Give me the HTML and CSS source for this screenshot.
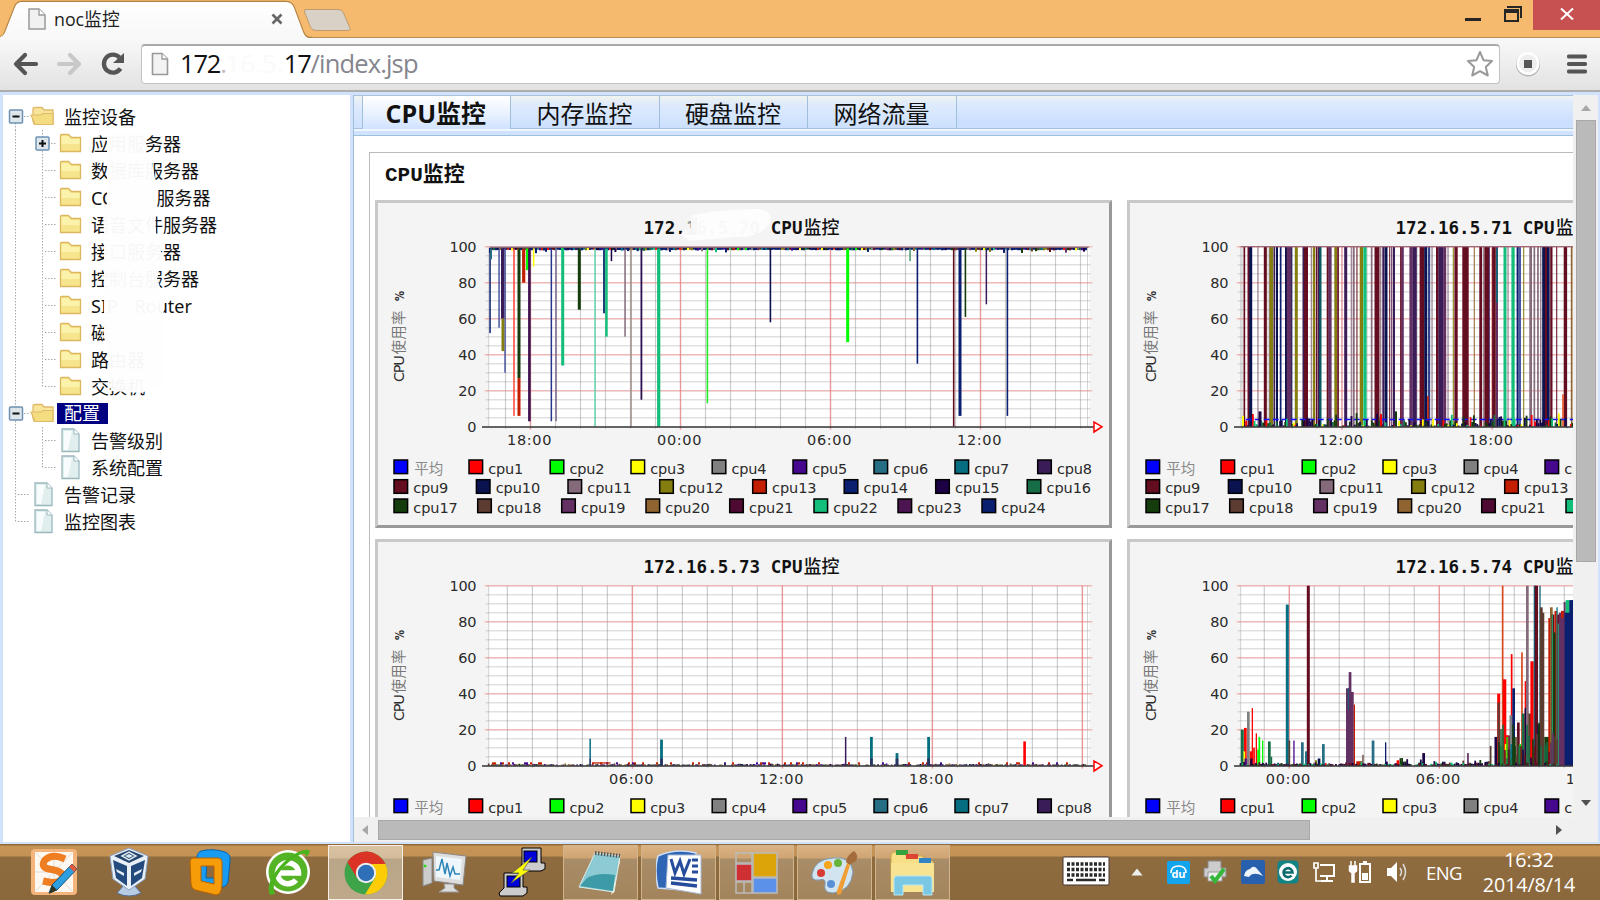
FILE: index.html
```html
<!DOCTYPE html>
<html lang="zh-CN">
<head>
<meta charset="utf-8">
<title>noc监控</title>
<link rel="stylesheet" href="styles.css">
</head>
<body>
<div class="titlebar">
  <div class="tab">
    <svg class="tab-shape" width="360" height="38" viewBox="0 0 360 38">
      <defs><linearGradient id="tg" x1="0" y1="0" x2="0" y2="1"><stop offset="0" stop-color="#fff"/><stop offset="1" stop-color="#f8f8f8"/></linearGradient></defs>
      <path d="M0 36.500H2Q4 35 6 29L15 6Q17 1.500 22 1.500H286Q292 2 294 7L303 31Q305 36.500 309 37.500H312" fill="none" stroke="#b28545" stroke-width="1.600"/>
      <path d="M0 38V37Q4 36 6 30L15 7Q17 2 22 2H286Q292 2 294 8L303 32Q305 37.500 309 38Z" fill="url(#tg)"/>
      <path d="M305 9.500H338Q342 9.500 343.500 13L350 28Q351 30.500 347 30.500H316Q312 30.500 310.500 27L304.500 12Q304 9.500 306 9.500Z" fill="#d9d1c5" stroke="#bd9d70" stroke-width="1"/>
    </svg>
    <svg class="tab-doc" width="18" height="22" viewBox="0 0 18 22"><path d="M1 1H11L17 7V21H1Z" fill="#f1f1f1" stroke="#999" stroke-width="1.500"/><path d="M11 1V7H17" fill="#fff" stroke="#999" stroke-width="1.300"/></svg>
    <span class="tab-title">noc监控</span>
    <svg class="tab-close" width="12" height="12" viewBox="0 0 12 12"><path d="M1.500 1.500L10.500 10.500M10.500 1.500L1.500 10.500" stroke="#666" stroke-width="2.600"/></svg>
  </div>
  <div class="win-buttons">
    <svg width="66" height="30" viewBox="0 0 66 30"><path d="M0 19.500H16" stroke="#262626" stroke-width="3"/><path d="M42 7H56V18" fill="none" stroke="#262626" stroke-width="2"/><path d="M40 9.500V21H53V9.500" fill="none" stroke="#262626" stroke-width="2"/><path d="M39 11H54" stroke="#262626" stroke-width="4"/></svg>
    <div class="win-close"><svg width="14" height="12" viewBox="0 0 14 12"><path d="M1 0.500L13 11.500M13 0.500L1 11.500" stroke="#fff" stroke-width="2"/></svg></div>
  </div>
</div>

<div class="toolbar">
  <svg class="nav" width="128" height="30" viewBox="0 0 128 30">
    <g fill="none" stroke-width="4.200" stroke-linecap="round" stroke-linejoin="round"><path d="M23 15H4M12 6L3 15L12 24" stroke="#555"/><path d="M46 15H66M57 6L66 15L57 24" stroke="#c8c8c8"/></g>
    <path d="M106.500 8.500A9 9 0 1 0 107.500 19.500" fill="none" stroke="#555" stroke-width="4.300"/><path d="M111 4V14H100Z" fill="#555"/>
  </svg>
  <div class="omnibox">
    <svg width="18" height="24" viewBox="0 0 18 24"><path d="M1.500 1.500H11L16.500 7V22.500H1.500Z" fill="#f3f3f3" stroke="#999" stroke-width="1.600"/><path d="M11 1.500V7H16.500" fill="#fff" stroke="#999" stroke-width="1.300"/></svg>
    <span class="url"><span>172<i class="dot">.</i><i class="fade">16.5.</i>17</span><span class="path">/index.jsp</span></span>
    <svg class="star" width="28" height="28" viewBox="0 0 28 28"><path d="M14 2L17.500 10.200L26 11L19.800 17L21.800 25.500L14 21.200L6.200 25.500L8.200 17L2 11L10.500 10.200Z" fill="#fff" stroke="#999" stroke-width="2" stroke-linejoin="round"/></svg>
  </div>
  <svg class="ext" width="26" height="26" viewBox="0 0 26 26"><circle cx="13" cy="13.500" r="12" fill="#b5b5b5"/><circle cx="13" cy="12.500" r="11.500" fill="#fff"/><circle cx="13" cy="12.500" r="9" fill="#eee"/><rect x="9" y="9" width="8" height="8" fill="#555"/></svg>
  <svg class="menu" width="20" height="20" viewBox="0 0 20 20"><path d="M2 2.500H18M2 10H18M2 17.500H18" stroke="#555" stroke-width="4.200" stroke-linecap="round"/></svg>
</div>

<div class="content">
  <div class="sidebar">
    <ul class="tree" id="tree"></ul>
    <svg class="smudge" width="90" height="266" viewBox="0 0 90 266">
      <path d="M16 0H54L55 22L61 30L65 50L64 75L65 100L70 108L70 130L66 145L71 160L73 185L73 252L50 260L20 258L18 240L17 215L13 205V100L12 80L16 70Z" fill="#fefefe" opacity=".97"/>
    </svg>
  </div>
  <div class="main">
    <div class="tabs">
      <div class="tabs-lead"></div>
      <div class="ptab active">CPU监控</div><div class="ptab">内存监控</div><div class="ptab">硬盘监控</div><div class="ptab">网络流量</div>
      <div class="tabs-rest"></div>
    </div>
    <div class="tabs-foot"></div>
    <div class="pane">
      <div class="panel">
        <h2>CPU监控</h2>
        <div class="charts" id="charts"></div>
      </div>
    </div>
    <div class="hscroll"><i class="arr left"></i><i class="hthumb"></i><i class="arr right"></i></div>
  </div>
  <div class="vscroll"><i class="arr up"></i><i class="vthumb"></i><i class="arr down"></i></div>
</div>

<div class="taskbar">
  <div class="tasks">
    <div class="task"><svg width="48" height="48" viewBox="0 0 48 48"><rect x="1" y="1" width="46" height="46" rx="4" fill="#f3b57b"/><rect x="5" y="4" width="38" height="40" fill="#fff8f0"/><path d="M6 5L42 43M42 5L6 43M24 4V44M5 24H43" stroke="#ddd"/><path d="M35 11Q22 5 15 12Q10 19 19 21Q34 23 33 30Q29 37 13 33" fill="none" stroke="#ef7d22" stroke-width="7"/><path d="M42 16L47 21L27 42L19 45L22 37Z" fill="#2d9fe0" stroke="#1a567c"/><path d="M42 16L47 21L44 24L39 19Z" fill="#e25a3a"/><path d="M22 37L27 42L19 46Z" fill="#332"/></svg></div>
    <div class="task vbox"><svg width="42" height="50" viewBox="0 0 42 50"><path d="M16 38H26L33 46Q21 52 9 46Z" fill="#b8cce4" stroke="#54719c"/><path d="M21 1L40 9L37 32L21 43L5 32L2 9Z" fill="#e9f0f7" stroke="#8ba3c2"/><path d="M21 3L36 9L21 16L6 9Z" fill="#26456d"/><path d="M14 9L21 5L28 9L21 13Z" fill="none" stroke="#dbe7f2" stroke-width="1.500"/><path d="M17 9L21 7L25 9L21 11Z" fill="#dbe7f2"/><path d="M5 13L19 19V39L8 31ZM37 13L23 19V39L34 31Z" fill="#244b7d"/><path d="M8 22L16 26V29L9 25ZM34 22L26 26V29L33 25Z" fill="#e5eef8"/></svg></div>
    <div class="task"><svg width="46" height="50" viewBox="0 0 46 50"><path d="M14 4Q26 1 38 5Q44 7 43 14L41 35Q40 39 36 40L14 38L10 14Q9 6 14 4ZM20 13L19 31H33L34 13Z" fill="#179bf3" fill-rule="evenodd" stroke="#0864ac"/><path d="M6 11H31Q35 11 35 15V36Q35 48 29 48L8 43Q4 41 4 37L3 15Q3 11 6 11ZM14 19V34L27 37V19Z" fill="#f69c09" fill-rule="evenodd" stroke="#b66200"/></svg></div>
    <div class="task"><svg width="48" height="50" viewBox="0 0 48 50"><circle cx="24" cy="25" r="22" fill="#fff"/><circle cx="24" cy="25" r="19.500" fill="#54b425"/><path d="M14 26H34.500A10.500 10.500 0 1 0 32 33" fill="none" stroke="#fff" stroke-width="5.500"/><path d="M6 48Q0 35 20 15Q36 1 45 3Q47 6 42 10Q42 2 26 14Q5 32 11 47Z" fill="#4bb31e"/></svg></div>
    <div class="task on chrome"><svg width="44" height="46" viewBox="0 0 44 46"><circle cx="22" cy="23" r="21.500" fill="#3fa449"/><path d="M3.400 12.200A21.500 21.500 0 0 1 41.500 14H22L13 28Z" fill="#dc3327"/><path d="M41.500 14A21.500 21.500 0 0 1 21 44.500L31 28Q34 19 22 14Z" fill="#fccd06"/><circle cx="22" cy="23" r="10.200" fill="#eee"/><circle cx="22" cy="23" r="8.200" fill="#2f6fb7"/></svg></div>
    <div class="task"><svg width="46" height="46" viewBox="0 0 46 46"><path d="M2 11L11 9V34L2 37Z" fill="#ccc" stroke="#888"/><circle cx="4" cy="17" r="1.500" fill="#2fdb22"/><path d="M12 3L45 7L42 36L13 32Z" fill="#ddd" stroke="#888"/><path d="M15 7L41 10L39 31L15 28Z" fill="#eef7fc"/><path d="M15 21H18L21 10L24 25L26 14L29 27L32 18L34 25H39" fill="none" stroke="#2e86b8" stroke-width="1.500"/><path d="M23 35H33V39L38 43H18L24 39Z" fill="#ddd" stroke="#999"/></svg></div>
    <div class="task"><svg width="48" height="50" viewBox="0 0 48 50"><g stroke="#000" stroke-width="1"><path d="M24 1H43V16H47V22L43 24H24L21 22L24 17Z" fill="#ccc"/><rect x="26" y="4" width="13" height="11" fill="#0000d8"/><path d="M6 26H25V40H29V46L25 49H2L1 46L6 41Z" fill="#ccc"/><rect x="9" y="29" width="13" height="11" fill="#0000d8"/></g><path d="M34 10L14 26H21L13 36L32 23H25Z" fill="#ff0" stroke="#555" stroke-width=".7"/></svg></div>
    <div class="task open note"><svg width="46" height="46" viewBox="0 0 46 46"><path d="M17 3L42 6L36 42L1 37Z" fill="#8ccbd3" stroke="#d8ecec"/><path d="M42 6L36 42L33 45L42 12Z" fill="#f0eedd"/><path d="M9 28Q20 22 37 25L35 41L2 36Z" fill="#3c9ba6"/><path d="M17 3L42 6" stroke="#555" stroke-width="4" stroke-dasharray="1.500 1.500"/></svg></div>
    <div class="task open"><svg width="46" height="48" viewBox="0 0 46 48"><path d="M2 7Q20 -1 40 4V42L2 39Q-2 20 2 7Z" fill="#2f65b5" stroke="#cbdcf4" stroke-width="1.500"/><path d="M12 6H45V45L10 39Z" fill="#fff" stroke="#a9bbd4"/><path d="M15 10L19 24L24 12L28 25L34 10M36 11H42M36 17H42M36 23H42" stroke="#264d9c" stroke-width="3" fill="none"/><path d="M15 29L41 31M15 34L41 37" stroke="#264d9c" stroke-width="3.500"/></svg></div>
    <div class="task open"><svg width="44" height="42" viewBox="0 0 44 42"><g fill="none" stroke="#bbb" stroke-width="1.500"><rect x="1" y="1" width="16" height="10"/><rect x="1" y="12" width="16" height="17" fill="#cf3033"/><rect x="18" y="1" width="24" height="24" fill="#dda409"/><rect x="18" y="26" width="24" height="15" fill="#5b91e9"/><path d="M1 30H17V41H1ZM9 30V41"/></g></svg></div>
    <div class="task open"><svg width="48" height="46" viewBox="0 0 48 46"><path d="M22 8Q40 6 42 22Q40 41 22 43Q12 43 14 34Q15 28 8 30Q0 31 1 24Q4 9 22 8Z" fill="#d3e4f1" stroke="#7998b4"/><circle cx="17" cy="15" r="4" fill="#f2a51d"/><circle cx="27" cy="13" r="4" fill="#68b43b"/><circle cx="10" cy="23" r="4" fill="#d63b35"/><circle cx="20" cy="34" r="4" fill="#5a90d5"/><path d="M43 1Q48 5 45 11L38 15L35 12Q36 5 43 1Z" fill="#a36c3a"/><path d="M36 13L39 15L30 44Q25 46 26 41Z" fill="#ef9d35"/></svg></div>
    <div class="task open"><svg width="48" height="48" viewBox="0 0 48 48"><path d="M4 3H17V7H34V12H44V42H2V6Z" fill="#f6df86" stroke="#caa544"/><rect x="7" y="1" width="12" height="5" fill="#35a23e"/><rect x="17" y="5" width="12" height="5" fill="#dd4433"/><rect x="30" y="9" width="12" height="5" fill="#3184c5"/><path d="M2 14H45V43H2Z" fill="#f8e392"/><path d="M5 46V30Q5 27 8 27H40Q43 27 43 30V46H34V36H14V46Z" fill="#7bc8e4" stroke="#b7e7f4"/></svg></div>
  </div>
  <div class="tray">
    <svg class="kbd" width="48" height="30" viewBox="0 0 48 30"><rect x="1" y="1" width="46" height="28" rx="1" fill="#fff" stroke="#433"/><path d="M5 8H43M5 13.500H43M5 19H43" stroke="#2a2a2a" stroke-width="3.500" stroke-dasharray="3 1.500"/><path d="M5 24H11M14 24H34M37 24H43" stroke="#2a2a2a" stroke-width="2.500"/></svg>
    <svg width="12" height="8" viewBox="0 0 12 8"><path d="M6 0.500L11.500 7.500H.5Z" fill="#eee"/></svg>
    <svg width="23" height="23" viewBox="0 0 23 23"><rect width="23" height="23" rx="2" fill="#12a5ee"/><path d="M4 12Q4 5 11.500 5T19 12" fill="none" stroke="#fff" stroke-width="1.500"/><text x="11.500" y="17" font-family="Open Sans" font-size="11" font-weight="700" fill="#fff" text-anchor="middle">du</text></svg>
    <svg width="26" height="26" viewBox="0 0 26 26"><path d="M6 2H19V9H24V18H2V9H6Z" fill="#ccc" stroke="#888"/><path d="M6 13H20V22H6Z" fill="#eee" stroke="#999"/><path d="M9 17L13 22L22 10" fill="none" stroke="#35b83a" stroke-width="4"/></svg>
    <svg width="24" height="24" viewBox="0 0 24 24"><rect width="24" height="24" rx="2" fill="#2860ae"/><path d="M3 16Q4 10 9 9Q13 4 17 10L22 16Q12 11 8 17Z" fill="#eef4fc"/></svg>
    <svg width="22" height="24" viewBox="0 0 22 24"><rect x=".5" y=".5" width="21" height="23" rx="4" fill="#128484"/><circle cx="11" cy="12" r="9" fill="#fff"/><path d="M7 12.500H15.500A4.500 4.500 0 1 0 14.500 15.500" fill="none" stroke="#0b6c70" stroke-width="2.600"/></svg>
    <svg width="24" height="24" viewBox="0 0 24 24"><path d="M8 5H22V16H8M15 16V21M9 21H21" fill="none" stroke="#fff" stroke-width="2"/><path d="M2 3V8H6V3ZM4 8V21H10" fill="none" stroke="#fff" stroke-width="1.700"/></svg>
    <svg width="24" height="24" viewBox="0 0 24 24"><path d="M12 4H22V22H12ZM15 2H19" fill="none" stroke="#fff" stroke-width="2"/><rect x="14" y="13" width="6" height="7" fill="#fff"/><path d="M3 1V6M7 1V6M1.500 6H8.500V11L6 13V22H4V13L1.500 11Z" fill="#fff" stroke="#fff" stroke-width="1.500"/></svg>
    <svg width="22" height="24" viewBox="0 0 22 24"><path d="M2 8H6L12 2V22L6 16H2Z" fill="#fff"/><path d="M15 8Q18 12 15 16M18 4Q23 12 18 20" fill="none" stroke="#ddd" stroke-width="1.500"/></svg>
    <span class="lang">ENG</span>
    <div class="clock"><span>16:32</span><span>2014/8/14</span></div>
  </div>
</div>
<script src="app.js"></script>
</body>
</html>
```

FILE: styles.css
```css
* { box-sizing: border-box; }
body { margin: 0; width: 1600px; height: 900px; overflow: hidden; display: flex; flex-direction: column; font-family: "Open Sans", "Noto Sans CJK SC", sans-serif; background: #d0e2fc; }
svg { display: block; flex: none; }
i { font-style: normal; }

.titlebar { height: 38px; flex: none; background: #f5ba6e; border-bottom: 1px solid #b98d50; display: flex; justify-content: space-between; }
.tab { position: relative; width: 360px; height: 38px; display: flex; align-items: center; padding-left: 28px; }
.tab-shape { position: absolute; left: 0; top: 0; }
.tab-doc, .tab-title, .tab-close { position: relative; }
.tab-title { margin-left: 8px; width: 217px; font-size: 17.800px; line-height: 24px; color: #222; }
.win-buttons { display: flex; height: 30px; }
.win-buttons > svg { margin-right: 2px; }
.win-close { width: 67px; height: 30px; background: #c75050; display: flex; align-items: center; justify-content: center; padding-bottom: 2px; }

.toolbar { height: 54px; flex: none; background: linear-gradient(#f9f9f9, #e2e2e2); border-bottom: 2px solid #adadad; display: flex; align-items: center; padding: 0 13px 1px 13px; }
.omnibox { width: 1360px; height: 40px; background: #fff; border: 1px solid #c3c3c3; border-top: 2px solid #aaa; border-radius: 4px; display: flex; align-items: center; padding: 0 5px 0 9px; }
.url { margin: -3px 0 0 11px; font-size: 25.500px; line-height: 34px; color: #111; flex: 1; letter-spacing: -1.200px; }
.dot { color: #bbb; }
.fade { color: #fafafa; letter-spacing: .2px; }
.path { color: #85858d; letter-spacing: -.85px; }
.ext { margin-left: 15px; }
.menu { margin-left: 26px; }

.content { height: 752px; flex: none; display: flex; padding: 3px 2px 2px 3px; background: #d0e2fc; }
.sidebar { position: relative; width: 347px; background: #fff; margin-right: 3px; padding-top: 8px; }
.smudge { position: absolute; left: 88px; top: 38px; filter: blur(.5px); }
.tree { list-style: none; margin: 0; padding: 0; font-family: "Noto Sans", "Noto Sans CJK SC", sans-serif; font-size: 18px; color: #111; }
.node { height: 27px; display: flex; align-items: center; white-space: nowrap; }
.node .label { line-height: 21px; height: 21px; padding: 2px 4px 0; margin-left: 3px; display: flex; align-items: center; white-space: pre; }
.node .label.top { margin-left: 6px; }
.node .label.sel { background: #000080; color: #fff; margin-left: 3px; padding: 0 8px 0 7px; }

.main { width: 1220px; display: flex; flex-direction: column; background: #fff; border-left: 1px solid #9fbfdc; overflow: hidden; }
.tabs { display: flex; height: 34px; flex: none; border-top: 1px solid #a9c3dd; }
.tabs-lead { width: 8.500px; background: linear-gradient(#f1f4f0, #dfeafc 30%, #cde1fd); border-right: 1px solid #9fbfdc; border-bottom: 1px solid #a7c2dc; }
.ptab { width: 148.600px; background: linear-gradient(#f1f4ee, #dfebfc 25%, #cbe0fe); border-right: 1px solid #9fbfdc; border-bottom: 1px solid #a7c2dc; font-family: "Noto Sans CJK SC", sans-serif; font-size: 24px; line-height: 34px; text-align: center; color: #111; padding-right: 1px; }
.ptab.active { background: linear-gradient(#fff, #e6f0ff 60%, #d0e2fe); border-bottom: 0; font-family: "Open Sans", "Noto Sans CJK SC", sans-serif; font-weight: 700; font-size: 25px; }
.tabs-rest { flex: 1; background: linear-gradient(#f1f4ee, #e0ecfd 15%, #cbe0fe 80%); border-bottom: 1px solid #a7c2dc; }
.tabs-foot { height: 7px; flex: none; background: #cfe2fe; border-bottom: 1px solid #9fbfdc; border-top: 2px solid #eef5ff; }
.pane { flex: 1; overflow: hidden; padding: 16px 0 0 15px; min-height: 0; }
.panel { width: 1560px; border: 1px solid #bbb; padding: 0 0 0 5px; }
.panel h2 { margin: 0; height: 46.500px; padding: 7px 0 0 10px; font: 700 21px/32px "Liberation Mono", "Noto Sans CJK SC", monospace; color: #111; }
.charts { display: grid; grid-template-columns: 737px 737px; column-gap: 15px; row-gap: 10.500px; }
.chart { height: 328.800px; background: #f4f4f4; border: 3px solid; border-color: #c9c9c9 #999 #999 #c9c9c9; display: flex; overflow: hidden; }
.chart svg { margin: -3px; }
.hscroll { height: 25px; flex: none; background: #f0f0f0; display: flex; align-items: center; padding: 0 11px 0 8px; }
.hthumb { width: 932px; height: 20px; background: #bababa; border: 1px solid #a8a8a8; margin: 0 auto 0 10px; }
.vscroll { width: 25px; background: #f0f0f0; display: flex; flex-direction: column; align-items: center; padding-top: 10px; }
.vthumb { width: 20px; height: 442px; background: #bababa; border: 1px solid #a8a8a8; margin: 9px 0 238px; }
.arr { width: 0; height: 0; border: 5.500px solid transparent; flex: none; }
.arr.up { border-top: 0; border-bottom: 6px solid #a8a8a8; }
.arr.down { border-bottom: 0; border-top: 6px solid #505050; }
.arr.left { border-left: 0; border-right: 6px solid #a8a8a8; }
.arr.right { border-right: 0; border-left: 6px solid #505050; }

.taskbar { height: 56px; flex: none; background: linear-gradient(#94693a 0, #94693a 1px, #c69455 2px, #c39254 12px, #8f6c40 13px, #8b683c 100%); display: flex; justify-content: space-between; }
.tasks { display: flex; padding-left: 15px; }
.task { width: 78px; height: 56px; display: flex; align-items: center; justify-content: center; }
.task.vbox { padding-right: 6px; }
.task.open { width: 75px; height: 55px; margin: 1px 3px 0 0; background: linear-gradient(#dab384 0, #cfa473 12px, #a98d68 13px, #a3845c 100%); border: 1px solid #cfb48d; }
.task.on { width: 75px; height: 55px; margin: 1px 2px 0 1px; background: linear-gradient(#dac3a2 0, #d4bc9b 12px, #b9a588 13px, #bfa98b 100%); border: 1.500px solid #f5efe5; }
.task.note { margin-left: 2px; }
.tray { display: flex; align-items: center; padding-right: 24px; color: #fff; }
.tray > svg { margin-right: 12.500px; }
.tray > .kbd { margin-right: 21px; margin-top: -2px; }
.tray > .kbd + svg { margin-right: 24px; }
.lang { font-size: 18.500px; margin-left: 7px; width: 56px; letter-spacing: -.6px; }
.clock { display: flex; flex-direction: column; align-items: center; font-size: 19.700px; line-height: 25px; width: 94px; letter-spacing: -.1px; }
```

FILE: app.js
```js
// ---------- device tree ----------
const line = (x1, y1, x2, y2) => `<path d="M${x1} ${y1}L${x2} ${y2}" stroke="#aaa" stroke-width="1" stroke-dasharray="1.5 1.5"/>`;
const box = (x, plus) => `<rect x="${x}" y="7" width="13" height="13" rx="1" fill="#dfe6ec" stroke="#6f92b4" stroke-width="1.500"/><path d="M${x + 3} 13.500H${x + 10}${plus ? `M${x + 6.5} 10V17` : ''}" stroke="#111" stroke-width="2"/>`;
const folder = x => `<path d="M${x} 5.500Q${x} 4.500 ${x + 1} 4.500H${x + 8}L${x + 11} 7.500H${x + 20}V21.500H${x}Z" fill="#f6e58c" stroke="#dcb760" stroke-width="1.300"/><path d="M${x + 1} 6H${x + 8}L${x + 10} 9H${x + 19}V14H${x + 1}Z" fill="#fbf3ac"/>`;
const openFolder = x => `<path d="M${x + 2} 18V6Q${x + 2} 4.500 ${x + 4} 4.500H${x + 11}L${x + 13} 7H${x + 22}V21H${x + 3}Z" fill="#f8e59a" stroke="#dfbb69" stroke-width="1.300"/><path d="M${x} 12H${x + 10}L${x + 12} 10.500H${x + 22}V21.500H${x + 4}Z" fill="#f4dc80" stroke="#dfbb69" stroke-width="1.200"/>`;
const doc = x => `<path d="M${x} 2H${x + 12}L${x + 17} 7V24.500H${x}Z" fill="#e1eeee" stroke="#9bb8bd" stroke-width="1.300"/><path d="M${x + 2} 4H${x + 10}L${x + 6} 23H${x + 2}Z" fill="#f8fcfc"/><path d="M${x + 12} 2V7H${x + 17}" fill="#fff" stroke="#9bb8bd"/>`;
const tree = [
  ['监控设备', 0, 'open', 'first'],
  ['应用服务器', 1, 'folder', 'plus'],
  ['数据库服务器', 1, 'folder'],
  ['CC<span style="width:43px"></span>服务器', 1, 'folder'],
  ['语音文件服务器', 1, 'folder'],
  ['接口服务器', 1, 'folder'],
  ['控制台服务器', 1, 'folder'],
  ['SIP<span style="width:12px"></span> Router', 1, 'folder'],
  ['磁', 1, 'folder'],
  ['路由器', 1, 'folder'],
  ['交换机', 1, 'folder', 'last'],
  ['配置', 0, 'open', 'sel'],
  ['告警级别', 1, 'doc'],
  ['系统配置', 1, 'doc', 'last'],
  ['告警记录', 0, 'doc'],
  ['监控图表', 0, 'doc', 'end']
];
document.getElementById('tree').innerHTML = tree.map(([t, lvl, icon, flag]) => {
  const w = lvl ? 81 : 54;
  let s = line(12.5, flag === 'first' ? 14 : 0, 12.5, flag === 'end' ? 14 : 27);
  if (lvl) s += line(39.5, 0, 39.5, flag === 'last' ? 14 : 27) + line(42, 13.5, 54, 13.5);
  else s += line(15, 13.5, 27, 13.5);
  if (icon === 'open') s += box(6.5, false) + openFolder(28);
  if (icon === 'folder') s += folder(57.5);
  if (icon === 'doc') s += doc(lvl ? 59 : 32);
  if (flag === 'plus') s += box(33, true);
  return `<li class="node"><svg width="${w}" height="27" viewBox="0 0 ${w} 27" style="margin-right:${lvl ? 0 : -3}px">${s}</svg><span class="label${lvl ? '' : ' top'}${flag === 'sel' ? ' sel' : ''}">${t}</span></li>`;
}).join('');

// ---------- charts ----------
let seed = 7;
const rnd = () => (seed = (seed * 16807) % 2147483647) / 2147483647;
const C = { maroon: '#640c20', navy: '#0a1250', blue: '#0a1f70', mauve: '#846a7a', olive: '#847d10', red: '#ff0000', brick: '#c41e00',
  purple: '#3a1c58', plum: '#623062', green: '#12be7a', lime: '#00ff00', yellow: '#ffff00', teal: '#056e80', steel: '#266e84', dgreen: '#143c0c',
  forest: '#176e46', brown: '#5c3c30', tan: '#906430', gray: '#808080', violet: '#45088f', dark: '#1c0244', wine: '#4e0a30' };
const X0 = 113.7, X1 = 714.5, T = 46.7, B = 226.7;
const Y = v => B - v * 1.8;
const rect = (x, w, hi, lo, c, o = 1) => `<rect x="${(x - w / 2).toFixed(1)}" y="${Y(hi).toFixed(1)}" width="${w}" height="${((hi - lo) * 1.8).toFixed(1)}" fill="${C[c] || c}" opacity="${o}"/>`;

const legend = [
  [259.3, [[18.3, '平均', '#0000ff'], [93.3, 'cpu1', 'red'], [174.5, 'cpu2', 'lime'], [255.3, 'cpu3', 'yellow'], [336.5, 'cpu4', 'gray'], [417.3, 'cpu5', 'violet'], [498.3, 'cpu6', 'steel'], [579.3, 'cpu7', 'teal'], [662, 'cpu8', 'purple']]],
  [279, [[18.3, 'cpu9', 'maroon'], [100.7, 'cpu10', 'navy'], [192.3, 'cpu11', 'mauve'], [284, 'cpu12', 'olive'], [377, 'cpu13', 'brick'], [468.5, 'cpu14', 'blue'], [560, 'cpu15', 'dark'], [651.5, 'cpu16', 'forest']]],
  [298.3, [[18.3, 'cpu17', 'dgreen'], [102, 'cpu18', 'brown'], [186, 'cpu19', 'plum'], [270.3, 'cpu20', 'tan'], [354, 'cpu21', 'wine'], [438.3, 'cpu22', 'green'], [522.3, 'cpu23', '#4c1450'], [606.3, 'cpu24', 'blue']]]
];

function noise(from, to, max, cols) {
  let s = '';
  for (let x = from; x < to; x += 1.7) if (rnd() < .8) s += rect(x, 1.8, .6 + rnd() * rnd() * max, 0, cols[Math.floor(rnd() * cols.length)]);
  return s;
}

// each bar: [x, width, high value, low value, colour]
function chart(title, firstMajor, firstLabel, bars, smear) {
  let s = `<rect x="${X0}" y="${T}" width="${X1 - X0}" height="180" fill="#fff"/>`;
  for (let v = 5; v <= 100; v += 5) s += `<path d="M${X0 - 3} ${Y(v)}H${X1 + 1}" stroke="#999" stroke-opacity=".3" stroke-width="1.500"/>`;
  for (let x = firstMajor - 150; x < X1; x += 25) if (x > X0) s += `<path d="M${x} ${T}V${B + 2}" stroke="#888" stroke-opacity=".42" stroke-width="1.200"/>`;
  s += `<path d="M${X0} ${T}V${B}M${X1 - 2} ${T}V${B}" stroke="#999" stroke-opacity=".4"/>`;
  for (let v = 20; v <= 100; v += 20) s += `<path d="M${X0 - 4} ${Y(v)}H${X1 + 3}" stroke="#ff8a8a" stroke-opacity=".45" stroke-width="1.600"/>`;
  let h = firstLabel;
  for (let x = firstMajor; x < X1; x += 150) {
    s += `<path d="M${x} ${T}V${B + 3}" stroke="#ff7070" stroke-opacity=".55" stroke-width="1.400"/>`;
    if (x < 700) s += `<text x="${x - 23.5}" y="245" textLength="44.500">${String(h).padStart(2, '0')}:00</text>`;
    h = (h + 6) % 24;
  }
  s += bars;
  s += `<path d="M107 ${B + .4}H720" stroke="#333" stroke-width="1.500"/><path d="M719 222V232L727 ${B}Z" fill="#fff" stroke="#f00" stroke-width="1.500"/>`;
  for (let v = 0; v <= 100; v += 20) s += `<text x="101.500" y="${Y(v) + 5}" text-anchor="end" textLength="${v === 100 ? 27 : v ? 18.2 : 9}">${v}</text>`;
  s += `<g font-weight="700" font-size="17.500" fill="#111"><text x="268.500" y="34" font-family="DejaVu Sans Mono" textLength="159">${title} CPU</text><text x="428.500" y="34" font-family="Noto Sans CJK SC" font-weight="500" font-size="18">监控</text></g>`;
  s += `<g transform="translate(28.500 182) rotate(-90)"><text x="0" y="0" textLength="27">CPU</text><text x="27.500" y="0" font-family="Noto Sans CJK SC" fill="#777" textLength="44">使用率</text><text x="81" y="0" textLength="10" font-weight="700" lengthAdjust="spacingAndGlyphs" font-size="13">%</text></g>`;
  for (const [y, items] of legend) for (const [x, t, c] of items) {
    s += `<rect x="${x + .7}" y="${y + .7}" width="13.600" height="13.600" fill="${C[c] || c}" stroke="#000" stroke-width="1.500"/>`;
    s += t === '平均' ? `<text x="${x + 21}" y="${y + 14.5}" font-family="Noto Sans CJK SC" fill="#888" textLength="29">${t}</text>` : `<text x="${x + 20}" y="${y + 14.2}" textLength="${t.length === 4 ? 35 : 44.5}">${t}</text>`;
  }
  if (smear) s += `<path d="M316 16Q335 10 385 9Q400 12 394 24Q385 38 360 37L315 41L310 37Q300 33 316 28Z" fill="#fdfdfd" opacity=".98"/><rect x="310" y="17" width="12" height="18" fill="#f4f4f4" opacity=".6"/>`;
  return `<div class="chart"><svg width="737" height="328" viewBox="0 0 737 328" font-family="DejaVu Sans" font-size="14.500" fill="#2a2a2a">${s}</svg></div>`;
}

// 172.16.5.70
let a = rect((X0 + X1) / 2, X1 - X0 - 2, 100, 99.2, '#806878');
const mix = Object.keys(C);
for (let x = 115; x < 712; x += 2) a += rect(x, 2, 99.3, 98.4 - (rnd() < .12 ? rnd() * 2 : rnd() * .4), rnd() < .4 ? 'blue' : mix[Math.floor(rnd() * mix.length)]);
[[115, 1.5, 52, 'blue'], [116, 2, 93, 'steel'], [124, 1.5, 55, '#4a569e'], [127.7, 3.5, 60, 'purple'], [130, 1.5, 30, '#4a569e'], [139, 1.6, 6, '#ff5040'], [144, 3, 27, 'dgreen'], [148.7, 3.2, 80, 'brick'], [152.5, 3, 87, 'lime'], [154.4, 2.6, 3, '#3c1050'], [158.7, 1.5, 89, 'yellow'], [176.3, 1.5, 3, '#28358c'], [181, 1.5, 3, '#7a6a90'], [187.7, 3, 34, 'green'], [204.3, 3, 65, 'dgreen'], [220, 1.5, 0, '#60cfa8'], [229, 2, 63, '#20407a'], [231.4, 2.5, 50, 'green'], [236.4, 1.5, 92, 'dark'], [240.4, 2, 97, 'dark'], [250, 1.5, 50, 'mauve'], [256, 1.5, 0, '#a09088'], [262.7, 2, 97.5, 'blue'], [266.4, 1.8, 15, '#2a1050'], [283.7, 3.2, 0, 'green'], [332.4, 1.6, 13, '#20f020'], [395.4, 1.6, 58, 'navy'], [472.7, 3, 47, 'lime'], [535, 1.5, 92, '#4a9a70'], [542.4, 1.6, 35, 'blue'], [578.7, 1.6, 0, 'maroon'], [585, 3, 6, 'blue'], [590.4, 1.6, 61, 'dgreen'], [611.4, 1.5, 68, 'purple'], [632.4, 1.6, 6, 'blue']]
  .forEach(([x, w, lo, c]) => { a += rect(x, w, 99, lo, c); });
a += rect(127.9, 2.8, 60, 42, 'olive') + rect(144, 3, 27, 6, 'brick');

// 172.16.5.71: [offset, width] in thirds of a pixel
let b = '';
[[403, 5, 'maroon'], [416, 7, 'maroon'], [422, 9, 'navy'], [444, 4, 'mauve'], [466, 9, 'maroon'], [478, 4, 'mauve'], [484, 11, 'olive'], [493, 5, 'purple'], [501, 6, 'navy'], [512, 5, 'blue'], [528, 6, 'navy'], [537, 14, 'plum'], [545, 4, 'navy'], [559, 9, 'olive'], [581, 7, 'purple'], [588, 12, 'maroon'], [604, 4, 'mauve'], [612, 7, 'olive'], [620, 5, 'maroon'], [627, 6, 'purple'], [631, 7, '#0a5a60'], [653, 6, 'maroon'], [660, 10, 'plum'], [677, 8, 'olive'], [684, 5, 'maroon'], [707, 9, 'purple'], [724, 4, 'mauve'], [731, 6, 'mauve'], [741, 4, 'maroon'], [754, 10, 'olive'], [765, 10, 'green'], [785, 5, 'mauve'], [801, 15, 'maroon'], [812, 4, 'mauve'], [820, 6, 'purple'], [828, 9, 'navy'], [839, 4, 'maroon'], [845, 4, 'plum'], [852, 6, 'purple'], [873, 5, 'maroon'], [878, 7, 'plum'], [903, 10, 'plum'], [914, 13, 'purple'], [936, 14, 'maroon'], [947, 9, 'navy'], [957, 7, '#34468c'], [966, 4, 'mauve'], [982, 8, 'maroon'], [993, 15, 'purple'], [1004, 9, 'plum'], [1014, 4, 'mauve'], [1030, 4, 'olive'], [1038, 10, 'maroon'], [1060, 6, 'maroon'], [1069, 14, 'maroon'], [1093, 4, 'tan'], [1112, 8, 'maroon'], [1120, 4, 'mauve'], [1130, 14, 'maroon'], [1138, 4, 'purple'], [1152, 11, 'maroon'], [1161, 6, 'plum'], [1185, 9, 'green'], [1194, 4, 'mauve'], [1209, 10, 'green'], [1223, 6, 'blue'], [1230, 6, '#4a5aa0'], [1241, 4, 'olive'], [1262, 8, 'mauve'], [1273, 5, 'mauve'], [1284, 5, 'mauve'], [1292, 4, 'mauve'], [1301, 9, 'navy'], [1308, 7, 'maroon'], [1315, 8, 'navy'], [1324, 7, 'maroon'], [1340, 4, 'maroon'], [1366, 10, 'maroon'], [1385, 5, 'tan'], [1400, 8, 'purple'], [1420, 12, 'maroon']]
  .forEach(([x, w, c]) => { b += rect(x / 3 - 17, +(w / 3).toFixed(1), 100, 0, c, w < 5 ? .8 : 1); });
b += rect(370, 1.6, 99, 69, 'teal') + rect(301, 1.6, 17, 0, 'brick') + rect(436, 1.6, 18, 0, '#e85020');
b += `<path d="M${X0} ${T}H500" stroke="#a06878" stroke-width="1.200"/><path d="M${X0 + 5} ${Y(4)}H500" stroke="#1010ff" stroke-width="1.300" stroke-dasharray="6 3"/>`;
b += noise(X0 + 2, 500, 7, ['dark', 'dark', 'dgreen', 'dgreen', 'navy', 'forest', 'dgreen', 'dark', 'yellow', 'red', 'green']);
b += rect(133, 3, 8.5, 0, 'dark') + rect(269, 2, 8.5, 0, 'dgreen') + rect(254, 2, 7, 0, 'red') + rect(116, 2, 6, 0, 'yellow');

// 172.16.5.73
let c = noise(X0, 712, .7, ['tan', 'navy', 'brown', 'dark', 'dgreen', 'violet']);
for (let x = 118; x < 700; x += 2) if (rnd() < .15) c += rect(x, 2, 1.9, .7, rnd() < .6 ? 'brick' : 'violet');
c += rect(227, 17, 1.9, 1.2, 'brick');
[[215.2, 1.5, 15, 'teal'], [286.5, 2.8, 14.5, 'teal'], [470.7, 1.5, 16, 'purple'], [496.4, 2.8, 16, 'teal'], [522, 2.8, 7, 'teal'], [553.6, 2.8, 16, 'teal'], [649.6, 2.6, 13.5, 'red']].forEach(([x, w, v, k]) => { c += rect(x, w, v, 0, k) + (k === 'teal' ? rect(x, w, 4, 0, 'purple', .7) : ''); });

// 172.16.5.74
let d = noise(270, 365, 4, ['dark', 'dark', 'dgreen', 'navy', 'brown']) + noise(X0, 270, 1.4, ['dark', 'maroon', 'brown', 'navy', 'green', 'red']);
[[397, 9, 20, 'forest'], [406, 8, 21, 'red'], [403, 5, 8, 'yellow'], [407, 7, 4, 'violet'], [415, 8, 30, 'gray'], [423, 7, 8, 'red'], [427, 4, 32, 'red'], [432, 5, 10, 'red'], [439, 4, 18, 'red'], [424, 7, 4, 'dark'], [448, 5, 16, 'lime'], [444, 5, 9, 'lime'], [458, 4, 14, 'lime'], [478, 8, 13.5, 'forest'], [484, 5, 5, 'forest'], [532, 9, 89.5, 'teal'], [538, 5, 14, 'brown'], [595, 9, 100, 'maroon'], [552, 4, 14, 'violet'], [577, 8, 13, 'steel'], [588, 6, 8, 'steel'], [640, 8, 12, 'steel'], [627, 8, 4, 'navy'], [618, 6, 3, 'olive'], [714, 12, 43, 'plum'], [716, 5, 43, 'teal'], [720, 8, 52, 'plum'], [727, 8, 41, 'plum'], [733, 4, 34, 'brick'], [719, 22, 31, 'plum'], [748, 18, 2.5, 'brick'], [759, 4, 6, 'brown'], [789, 8, 14, 'steel'], [827, 4, 13, 'blue'], [864, 8, 3, 'red'], [941, 8, 7, 'dark'], [1074, 5, 7, 'plum'], [1142, 5, 11, 'brown'], [1158, 9, 16, 'dark'], [1166, 9, 40, 'red'], [1166, 7, 35, 'brown'], [1173, 6, 11, 'lime'], [1178, 5, 100, '#d84820'], [1184, 10, 48, 'red'], [1190, 8, 17, 'red'], [1187, 5, 12, 'yellow'], [1191, 4, 16, 'lime'], [1205, 5, 62, 'red'], [1203, 9, 28, 'gray'], [1211, 8, 43, 'blue'], [1197, 9, 9, 'forest'], [1206, 9, 12, 'teal'], [1213, 8, 16, 'dgreen'], [1219, 6, 6, 'mauve'], [1225, 8, 24, 'maroon'], [1231, 6, 12, 'lime'], [1236, 5, 63, '#d84820'], [1240, 9, 29, 'forest'], [1246, 4, 47, 'red'], [1248, 8, 32, 'dark'], [1252, 8, 100, 'mauve'], [1259, 8, 29, 'brown'], [1266, 10, 58, 'red'], [1274, 6, 100, 'teal'], [1279, 10, 100, 'maroon'], [1290, 4, 100, 'steel'], [1286, 8, 23, 'navy'], [1294, 8, 88, 'brown'], [1299, 8, 85, 'brown'], [1310, 14, 16, 'dgreen'], [1319, 8, 82, 'brick'], [1324, 8, 88, 'tan'], [1329, 9, 84, 'maroon'], [1327, 3, 84, 'green'], [1337, 7, 86, 'brick'], [1341, 4, 88, 'teal'], [1333, 7, 74, 'dgreen'], [1345, 6, 84, 'maroon'], [1345, 3, 79, 'green'], [1350, 7, 85, 'plum'], [1358, 10, 86, 'brick'], [1356, 12, 82, 'plum'], [1364, 6, 91, 'plum'], [1373, 12, 92, 'green'], [1384, 12, 92, 'blue'], [1377, 26, 85, 'blue'], [1400, 30, 92, 'blue']]
  .forEach(([x, w, v, k]) => { d += rect(x / 3 - 17, +(w / 3).toFixed(1), v, 0, k); });
for (let x = 372; x < 432; x += 2) d += rect(x, 2, 4 + rnd() * 20, 0, ['dark', 'brown', 'dgreen', 'plum', 'forest', 'maroon'][Math.floor(rnd() * 6)], .8);
d += noise(X0, 432, 2, ['dark', 'maroon', 'green', 'dgreen', 'dark']);

document.getElementById('charts').innerHTML =
  chart('172.16.5.70', 155.5, 18, a, true) + chart('172.16.5.71', 215, 12, b) +
  chart('172.16.5.73', 257.4, 6, c) + chart('172.16.5.74', 162.3, 0, d);
```
